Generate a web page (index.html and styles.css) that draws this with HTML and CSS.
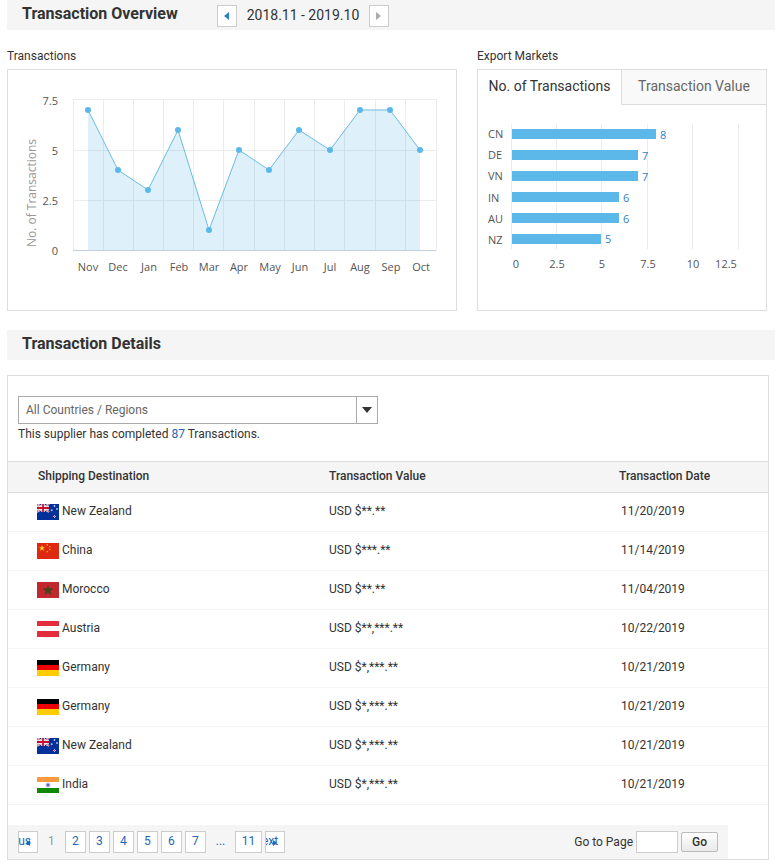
FILE: index.html
```html
<!DOCTYPE html>
<html lang="en">
<head>
    <meta charset="UTF-8">
    <meta name="viewport" content="width=device-width, initial-scale=1.0">
    <title>Transaction Overview</title>
    <link rel="stylesheet" href="styles.css">
</head>
<body>
    <!-- Flags used in the table -->
    <svg class="flag-defs" aria-hidden="true">
        <symbol id="flag-nz" viewBox="0 0 22 16">
            <rect width="22" height="16" fill="#00309a"/>
            <path d="M0 0L12 8M12 0L0 8" stroke="#fff" stroke-width="2"/>
            <path d="M0 0L12 8M12 0L0 8" stroke="#d8283c" stroke-width="0.8"/>
            <path d="M6 0V8M0 4H12" stroke="#fff" stroke-width="3.4"/>
            <path d="M6 0V8M0 4H12" stroke="#c8102e" stroke-width="1.8"/>
            <path d="M17.5 1v2M16.5 2h2M14.7 5.2v2M13.7 6.2h2M20 4v2M19 5h2M17.5 11v3M16 12.5h3" stroke="#b9c3ea" stroke-width="0.9"/>
            <path d="M17.5 12v1M17 12.5h1" stroke="#d8283c" stroke-width="0.6"/>
        </symbol>
        <symbol id="flag-cn" viewBox="0 0 22 16">
            <rect width="22" height="16" fill="#de2910"/>
            <path d="M5 2L5.8 4.2H8L6.2 5.5L6.9 7.8L5 6.4L3.1 7.8L3.8 5.5L2 4.2H4.2Z" fill="#ffd21a"/>
            <path d="M9.5 2h1.5M12 3.7h1.5M12 6.5h1.5M9.5 8.6h1.5" stroke="#f5a018" stroke-width="1.3"/>
        </symbol>
        <symbol id="flag-ma" viewBox="0 0 22 16">
            <rect width="22" height="16" fill="#c1272d"/>
            <path d="M11 3.5L12.3 6.7H15.8L13.1 9L14.1 12.7L11 10.6L7.9 12.7L8.9 9L6.2 6.7H9.7Z" fill="#45451f" stroke="#45451f" stroke-width="0.5"/>
        </symbol>
        <symbol id="flag-at" viewBox="0 0 22 16">
            <rect width="22" height="16" fill="#e32c3c"/>
            <rect y="5" width="22" height="5" fill="#fff"/>
        </symbol>
        <symbol id="flag-de" viewBox="0 0 22 16">
            <rect width="22" height="5" fill="#000"/>
            <rect y="5" width="22" height="5" fill="#f00000"/>
            <rect y="10" width="22" height="6" fill="#ffcc00"/>
        </symbol>
        <symbol id="flag-in" viewBox="0 0 22 16">
            <rect width="22" height="16" fill="#fff"/>
            <rect width="22" height="5" fill="#f99a3c"/>
            <rect y="11" width="22" height="5" fill="#128807"/>
            <circle cx="11" cy="8" r="2" fill="#8f8fd0" stroke="#b4b4e2"/>
            <circle cx="11" cy="8" r="1" fill="#4b4ba8"/>
        </symbol>
    </svg>

    <div class="title-bar">
        <h2>Transaction Overview</h2>
        <div class="period">
            <button class="period-btn" aria-label="Previous period"><svg width="6" height="8" viewBox="0 0 6 8"><path d="M5 0V8L0 4Z" fill="#2e7fc9"/></svg></button>
            <span>2018.11 - 2019.10</span>
            <button class="period-btn" aria-label="Next period" disabled><svg width="6" height="8" viewBox="0 0 6 8"><path d="M0 0V8L5 4Z" fill="#aaa"/></svg></button>
        </div>
    </div>

    <div class="charts">
        <div class="chart-block">
            <h3>Transactions</h3>
            <div class="panel">
                <svg class="chart" viewBox="0 0 448 240">
                    <path class="grid" d="M65 29V180M95 29V180M125 29V180M155 29V180M185 29V180M215 29V180M246 29V180M276 29V180M306 29V180M336 29V180M367 29V180M397 29V180M428 29V180M65 29H428M65 80H428M65 130H428"/>
                    <path class="area" d="M80 40L110 100L140 120L170 60L201 160L231 80L261 100L291 60L322 80L352 40L382 40L412 80V180H80Z"/>
                    <path class="axis" d="M65 180H428"/>
                    <path class="line" d="M80 40L110 100L140 120L170 60L201 160L231 80L261 100L291 60L322 80L352 40L382 40L412 80"/>
                    <g class="dots">
                        <circle cx="80" cy="40" r="3"/>
                        <circle cx="110" cy="100" r="3"/>
                        <circle cx="140" cy="120" r="3"/>
                        <circle cx="170" cy="60" r="3"/>
                        <circle cx="201" cy="160" r="3"/>
                        <circle cx="231" cy="80" r="3"/>
                        <circle cx="261" cy="100" r="3"/>
                        <circle cx="291" cy="60" r="3"/>
                        <circle cx="322" cy="80" r="3"/>
                        <circle cx="352" cy="40" r="3"/>
                        <circle cx="382" cy="40" r="3"/>
                        <circle cx="412" cy="80" r="3"/>
                    </g>
                    <g class="label label-end">
                        <text x="50" y="35">7.5</text>
                        <text x="50" y="85">5</text>
                        <text x="50" y="135">2.5</text>
                        <text x="50" y="185">0</text>
                    </g>
                    <g class="label label-mid">
                        <text x="80" y="201">Nov</text>
                        <text x="110" y="201">Dec</text>
                        <text x="141" y="201">Jan</text>
                        <text x="171" y="201">Feb</text>
                        <text x="201" y="201">Mar</text>
                        <text x="231" y="201">Apr</text>
                        <text x="262" y="201">May</text>
                        <text x="292" y="201">Jun</text>
                        <text x="322" y="201">Jul</text>
                        <text x="352" y="201">Aug</text>
                        <text x="383" y="201">Sep</text>
                        <text x="413" y="201">Oct</text>
                    </g>
                    <text class="axis-title" transform="translate(28 123) rotate(-90)">No. of Transactions</text>
                </svg>
            </div>
        </div>

        <div class="chart-block">
            <h3>Export Markets</h3>
            <div class="panel">
                <div class="tabs">
                    <button class="tab active">No. of Transactions</button>
                    <button class="tab">Transaction Value</button>
                </div>
                <svg class="chart" viewBox="0 0 288 205">
                    <path class="grid" d="M33 19V144M78 19V144M123 19V144M169 19V144M214 19V144M260 19V144"/>
                    <g class="bars">
                        <rect x="34" y="24" width="144" height="10"/>
                        <rect x="34" y="45" width="126" height="10"/>
                        <rect x="34" y="66" width="126" height="10"/>
                        <rect x="34" y="87" width="107" height="10"/>
                        <rect x="34" y="108" width="107" height="10"/>
                        <rect x="34" y="129" width="89" height="10"/>
                    </g>
                    <g class="label">
                        <text x="10" y="33">CN</text>
                        <text x="10" y="54">DE</text>
                        <text x="10" y="75">VN</text>
                        <text x="10" y="97">IN</text>
                        <text x="10" y="118">AU</text>
                        <text x="10" y="139">NZ</text>
                    </g>
                    <g class="label value">
                        <text x="182" y="34">8</text>
                        <text x="164" y="55">7</text>
                        <text x="164" y="76">7</text>
                        <text x="145" y="97">6</text>
                        <text x="145" y="118">6</text>
                        <text x="127" y="138">5</text>
                    </g>
                    <g class="label label-mid">
                        <text x="38" y="163">0</text>
                        <text x="79" y="163">2.5</text>
                        <text x="124" y="163">5</text>
                        <text x="170" y="163">7.5</text>
                        <text x="215" y="163">10</text>
                        <text x="248" y="163">12.5</text>
                    </g>
                </svg>
            </div>
        </div>
    </div>

    <div class="title-bar">
        <h2>Transaction Details</h2>
    </div>

    <div class="details">
        <div class="filter">
            <div class="select-box">
                <select aria-label="Country or region">
                    <option>All Countries / Regions</option>
                </select>
                <svg class="select-arrow" width="10" height="6" viewBox="0 0 10 6"><path d="M0 0H10L5 6Z" fill="#333"/></svg>
            </div>
            <p>This supplier has completed <span class="count">87</span> Transactions.</p>
        </div>

        <table>
            <thead>
                <tr>
                    <th class="col-dest">Shipping Destination</th>
                    <th class="col-value">Transaction Value</th>
                    <th class="col-date">Transaction Date</th>
                </tr>
            </thead>
            <tbody>
                <tr>
                    <td><div class="country"><svg class="flag"><use href="#flag-nz"/></svg>New Zealand</div></td>
                    <td>USD $**.**</td>
                    <td>11/20/2019</td>
                </tr>
                <tr>
                    <td><div class="country"><svg class="flag"><use href="#flag-cn"/></svg>China</div></td>
                    <td>USD $***.**</td>
                    <td>11/14/2019</td>
                </tr>
                <tr>
                    <td><div class="country"><svg class="flag"><use href="#flag-ma"/></svg>Morocco</div></td>
                    <td>USD $**.**</td>
                    <td>11/04/2019</td>
                </tr>
                <tr>
                    <td><div class="country"><svg class="flag"><use href="#flag-at"/></svg>Austria</div></td>
                    <td>USD $**,***.**</td>
                    <td>10/22/2019</td>
                </tr>
                <tr>
                    <td><div class="country"><svg class="flag"><use href="#flag-de"/></svg>Germany</div></td>
                    <td>USD $*,***.**</td>
                    <td>10/21/2019</td>
                </tr>
                <tr>
                    <td><div class="country"><svg class="flag"><use href="#flag-de"/></svg>Germany</div></td>
                    <td>USD $*,***.**</td>
                    <td>10/21/2019</td>
                </tr>
                <tr>
                    <td><div class="country"><svg class="flag"><use href="#flag-nz"/></svg>New Zealand</div></td>
                    <td>USD $*,***.**</td>
                    <td>10/21/2019</td>
                </tr>
                <tr>
                    <td><div class="country"><svg class="flag"><use href="#flag-in"/></svg>India</div></td>
                    <td>USD $*,***.**</td>
                    <td>10/21/2019</td>
                </tr>
            </tbody>
        </table>

        <div class="pager">
            <div class="pages">
                <a class="page step" href="#">Previous<svg class="step-arrow" width="4" height="6" viewBox="0 0 4 6"><path d="M4 0V6L0 3Z"/></svg></a>
                <span class="page current">1</span>
                <a class="page" href="#">2</a>
                <a class="page" href="#">3</a>
                <a class="page" href="#">4</a>
                <a class="page" href="#">5</a>
                <a class="page" href="#">6</a>
                <a class="page" href="#">7</a>
                <span class="page dots-gap">...</span>
                <a class="page" href="#">11</a>
                <a class="page step" href="#">Next<svg class="step-arrow" width="4" height="6" viewBox="0 0 4 6"><path d="M0 0V6L4 3Z"/></svg></a>
            </div>
            <form class="go-form">
                <label for="page-no">Go to Page</label>
                <input type="text" id="page-no">
                <button type="button">Go</button>
            </form>
        </div>
    </div>
</body>
</html>
```
FILE: styles.css
```css
* {
    box-sizing: border-box;
}

body {
    margin: 0;
    padding: 0 0 3px 7px;
    background: #fff;
    color: #333;
    font-family: Roboto, "Liberation Sans", sans-serif;
    font-size: 12px;
    line-height: 16px;
}

h2, h3, p {
    margin: 0;
    font-weight: normal;
}

button, input, select {
    font-family: inherit;
    font-size: inherit;
    color: inherit;
    margin: 0;
}

a {
    color: #1e66b8;
    text-decoration: none;
}

.flag-defs {
    display: none;
}

.title-bar {
    display: flex;
    gap: 39px;
    height: 30px;
    padding-left: 15px;
    background: #f5f5f5;
}

.title-bar h2 {
    font-size: 16px;
    font-weight: bold;
    line-height: 28px;
}

.period {
    display: flex;
    align-items: flex-start;
    gap: 10px;
    padding-top: 5px;
    font-size: 14px;
    line-height: 20px;
}

.period-btn {
    display: flex;
    align-items: center;
    justify-content: center;
    width: 20px;
    height: 22px;
    padding: 0;
    background: #fff;
    border: 1px solid #ccc;
}

/* Charts */
.charts {
    display: grid;
    grid-template-columns: 450fr 290fr;
    gap: 20px;
    margin: 18px 8px 19px 0;
}

.chart-block h3 {
    font-size: 12px;
    margin-bottom: 5px;
}

.panel {
    border: 1px solid #ddd;
}

.chart {
    display: block;
    width: 100%;
    height: auto;
}

.grid {
    fill: none;
    stroke: #ececec;
    shape-rendering: crispEdges;
}

.axis {
    stroke: #c0d0e0;
    shape-rendering: crispEdges;
}

.area {
    fill: #5bb8e8;
    fill-opacity: 0.2;
}

.line {
    fill: none;
    stroke: #6bbbe3;
}

.dots, .bars {
    fill: #5bb8e8;
}

.label {
    font-family: "Open Sans", sans-serif;
    font-size: 11px;
    fill: #555;
}

.label-end {
    text-anchor: end;
}

.label-mid {
    text-anchor: middle;
}

.value {
    fill: #2e7fc9;
}

.axis-title {
    font-family: "Open Sans", sans-serif;
    font-size: 12px;
    text-anchor: middle;
    fill: #999;
}

.tabs {
    display: grid;
    grid-template-columns: 143fr 145fr;
    height: 35px;
}

.tab {
    padding: 0 0 2px;
    background: #f9f9f9;
    border: 0;
    border-left: 1px solid #ddd;
    border-bottom: 1px solid #ddd;
    font-size: 14px;
    color: #666;
    white-space: nowrap;
}

.tab.active {
    background: #fff;
    border-color: #fff;
    border-left: 0;
    color: #333;
}

/* Details */
.details {
    margin: 15px 6px 0 0;
    border: 1px solid #ddd;
}

.filter {
    padding: 20px 10px 19px;
}

.select-box {
    display: grid;
    grid-template-columns: 1fr 22px;
    align-items: center;
    width: 360px;
    max-width: 100%;
}

.select-box select {
    grid-area: 1 / 1 / 2 / 3;
    height: 28px;
    padding: 0 7px;
    appearance: none;
    background: linear-gradient(#aaa, #aaa) no-repeat right 20px top / 1px 100% #fff;
    border: 1px solid #aaa;
    border-radius: 0;
    color: #666;
}

.select-arrow {
    grid-area: 1 / 2;
    justify-self: center;
    z-index: 1;
    pointer-events: none;
}

.filter p {
    margin-top: 2px;
}

.count {
    color: #1e66b8;
}

table {
    width: 100%;
    border-collapse: separate;
    border-spacing: 0;
    table-layout: fixed;
}

th, td {
    padding: 0;
    text-align: left;
    vertical-align: middle;
}

th {
    height: 32px;
    padding-bottom: 2px;
    background: #f5f5f5;
    border-top: 1px solid #ddd;
    border-bottom: 1px solid #ddd;
    font-weight: 500;
}

.col-dest {
    padding-left: 30px;
}

.col-value {
    width: 290px;
}

.col-date {
    width: 149px;
}

td {
    height: 39px;
    padding-bottom: 2px;
    border-bottom: 1px solid #f5f5f5;
}

td:first-child {
    padding-left: 29px;
}

td:last-child {
    padding-left: 2px;
}

.country {
    display: flex;
    align-items: flex-start;
    gap: 3px;
}

.flag {
    width: 22px;
    height: 16px;
    margin-top: 1px;
}

/* Pager */
.pager {
    display: flex;
    align-items: center;
    justify-content: space-between;
    height: 34px;
    margin: 20px 40px 0 0;
    padding: 0 10px;
    background: #f5f5f5;
}

.pages {
    display: flex;
    gap: 3px;
}

.page {
    min-width: 21px;
    height: 22px;
    padding: 0 6px;
    background: #fff;
    border: 1px solid #ccc;
    line-height: 18px;
    text-align: center;
}

.page.current, .page.dots-gap {
    min-width: 20px;
    background: none;
    border-color: transparent;
    color: #999;
}

.page.dots-gap {
    width: 23px;
    color: #1e66b8;
}

.page.step {
    position: relative;
    display: flex;
    justify-content: flex-end;
    width: 20px;
    min-width: 0;
    overflow: hidden;
}

.step-arrow {
    position: absolute;
    right: 7px;
    top: 8px;
    fill: #1e66b8;
}

.go-form {
    display: flex;
    align-items: center;
    gap: 3px;
}

.go-form input {
    width: 42px;
    height: 22px;
    padding: 0 4px;
    border: 1px solid #ccc;
}

.go-form button {
    width: 37px;
    height: 20px;
    padding: 0;
    background: linear-gradient(#fff, #e9e9e9);
    border: 1px solid #bbb;
    border-radius: 2px;
    font-weight: 500;
}
```
